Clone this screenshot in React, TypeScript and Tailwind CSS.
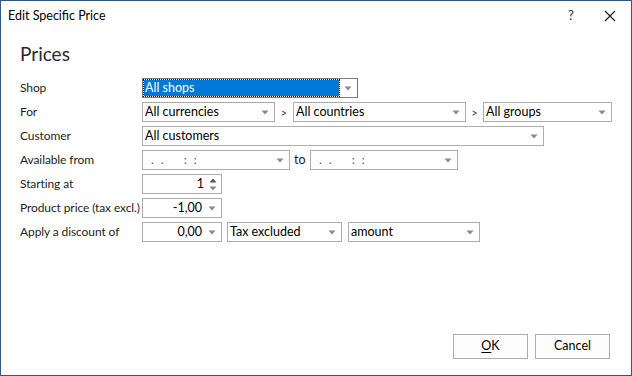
import React from "react";

const FONT = { fontFamily: 'Lato, "Noto Sans", sans-serif' };

function Arrow() {
  return (
    <svg width="8" height="5" viewBox="0 0 8 5" className="shrink-0">
      <path d="M0.5 0.5 H7.5 L4 4.5 Z" fill="#8a8a8a" />
    </svg>
  );
}

function Box({
  w,
  children,
  right = true,
  className = "",
}: {
  w: string;
  children?: React.ReactNode;
  right?: boolean;
  className?: string;
}) {
  return (
    <div
      className={`h-[20px] border border-[#adadad] bg-white flex items-center ${w} ${className}`}
    >
      <div className="flex-1 min-w-0 flex items-center h-full whitespace-nowrap">{children}</div>
      {right && (
        <div className="w-[18px] flex justify-center items-center">
          <Arrow />
        </div>
      )}
    </div>
  );
}

function Row({ label, children }: { label: string; children: React.ReactNode }) {
  return (
    <div className="flex items-center h-[20px]">
      <div className="w-[122px] shrink-0 text-[12px] tracking-[-0.1px] text-[#1e1e1e] leading-none whitespace-nowrap">
        {label}
      </div>
      <div className="flex items-center">{children}</div>
    </div>
  );
}

function DateText() {
  return (
    <div className="flex text-[12px] text-[#555] leading-none">
      <span className="ml-[8px]">.</span>
      <span className="ml-[7px]">.</span>
      <span className="ml-[20px]">:</span>
      <span className="ml-[7px]">:</span>
    </div>
  );
}

const T = "pl-[2px] text-[12.5px] leading-none text-black";
const TR = "flex-1 text-right text-[12.5px] leading-none text-black pr-[1px]";

export default function App() {
  return (
    <div
      className="w-[632px] h-[376px] border border-[#2b5797] bg-white flex flex-col overflow-hidden"
      style={FONT}
    >
      {/* Title bar */}
      <div className="h-[30px] flex items-center shrink-0">
        <div className="pl-[7px] text-[12.5px] text-black flex-1">Edit Specific Price</div>
        <div className="w-[20px] text-center text-[13px] text-[#333] mr-[22px]">?</div>
        <div className="w-[14px] flex justify-center mr-[14px]">
          <svg width="12" height="12" viewBox="0 0 12 12">
            <path d="M1 1 L11 11 M11 1 L1 11" stroke="#1e1e1e" strokeWidth="1.2" />
          </svg>
        </div>
      </div>

      <div className="flex-1 flex flex-col pl-[19px] pr-[20px]">
        <div className="pt-[11px] text-[19px] leading-[24px] text-[#2a2a2a]">Prices</div>

        <div className="mt-[12px] flex flex-col gap-[4px]">
          <Row label="Shop">
            <div className="w-[216px] h-[20px] border border-[#7a7a7a] bg-white flex items-center">
              <div className="flex-1 h-[16px] ml-[1px] bg-[#0078d7] outline outline-1 outline-dotted outline-[#000] text-white text-[12.5px] leading-[16px] pl-[1px]">
                All shops
              </div>
              <div className="w-[18px] flex justify-center items-center">
                <Arrow />
              </div>
            </div>
          </Row>

          <Row label="For">
            <Box w="w-[133px]">
              <span className={T}>All currencies</span>
            </Box>
            <span className="w-[18px] text-center text-[11px] text-[#444] leading-none">&gt;</span>
            <Box w="w-[173px]">
              <span className={T}>All countries</span>
            </Box>
            <span className="w-[17px] text-center text-[11px] text-[#444] leading-none">&gt;</span>
            <Box w="w-[129px]">
              <span className={T}>All groups</span>
            </Box>
          </Row>

          <Row label="Customer">
            <Box w="w-[402px]">
              <span className={T}>All customers</span>
            </Box>
          </Row>

          <Row label="Available from">
            <Box w="w-[148px]">
              <DateText />
            </Box>
            <span className="w-[20px] pl-[4px] text-[12.5px] text-[#1e1e1e] leading-none">to</span>
            <Box w="w-[148px]">
              <DateText />
            </Box>
          </Row>

          <Row label="Starting at">
            <div className="w-[80px] h-[20px] border border-[#adadad] bg-white flex items-center">
              <span className="flex-1 text-right text-[12.5px] leading-none text-black pr-[3px]">1</span>
              <div className="w-[14px] flex flex-col items-center gap-[3px] pr-[2px]">
                <svg width="8" height="5" viewBox="0 0 8 5">
                  <path d="M0.5 4.5 H7.5 L4 0.5 Z" fill="#555" />
                </svg>
                <svg width="8" height="5" viewBox="0 0 8 5">
                  <path d="M0.5 0.5 H7.5 L4 4.5 Z" fill="#8a8a8a" />
                </svg>
              </div>
            </div>
          </Row>

          <Row label="Product price (tax excl.)">
            <Box w="w-[80px]">
              <span className={TR}>-1,00</span>
            </Box>
          </Row>

          <Row label="Apply a discount of">
            <Box w="w-[80px]">
              <span className={TR}>0,00</span>
            </Box>
            <Box w="w-[115px]" className="ml-[5px]">
              <span className={T}>Tax excluded</span>
            </Box>
            <Box w="w-[132px]" className="ml-[6px]">
              <span className={T}>amount</span>
            </Box>
          </Row>
        </div>

        <div className="flex-1" />

        <div className="flex justify-end gap-[7px] mb-[16px] pr-[1px]">
          <button className="w-[75px] h-[25px] border border-[#adadad] bg-[#fdfdfd] text-[12.5px] text-black">
            <span className="underline underline-offset-2">O</span>K
          </button>
          <button className="w-[75px] h-[25px] border border-[#adadad] bg-[#fdfdfd] text-[12.5px] text-black">
            Cancel
          </button>
        </div>
      </div>
    </div>
  );
}
